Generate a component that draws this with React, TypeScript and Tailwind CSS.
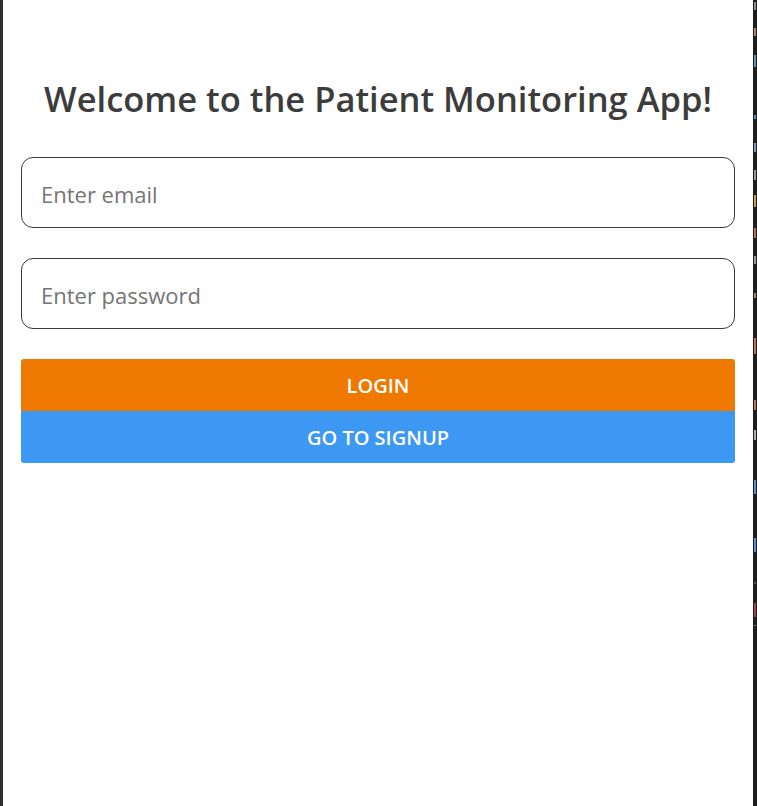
import React from "react";

const codeMarks: { top: number; h: number; c: string }[] = [
  { top: 2, h: 8, c: "#8a8a8a" },
  { top: 28, h: 8, c: "#b08a6a" },
  { top: 55, h: 12, c: "#5a8fc0" },
  { top: 115, h: 4, c: "#4a90d8" },
  { top: 143, h: 9, c: "#7a9ac8" },
  { top: 170, h: 10, c: "#9a9a9a" },
  { top: 195, h: 12, c: "#c8a040" },
  { top: 228, h: 10, c: "#c07050" },
  { top: 256, h: 8, c: "#9a9a9a" },
  { top: 293, h: 5, c: "#b0805a" },
  { top: 338, h: 16, c: "#c07050" },
  { top: 400, h: 10, c: "#c07050" },
  { top: 430, h: 10, c: "#b0b0b0" },
  { top: 480, h: 14, c: "#5a8fd8" },
  { top: 538, h: 14, c: "#5a8fd8" },
  { top: 582, h: 2, c: "#555555" },
  { top: 603, h: 14, c: "#a04848" },
  { top: 625, h: 1, c: "#777777" },
];

export default function App() {
  return (
    <div className="flex h-[806px] w-[757px] overflow-hidden bg-[#1e1e1e]">
      <div className="w-[3px] shrink-0 bg-[#2d2d2d]" />
      <main
        className="flex w-[750px] shrink-0 flex-col bg-white px-[18px] pt-[77px]"
        style={{ fontFamily: '"Open Sans", "Noto Sans", sans-serif' }}
      >
        <h1 className="text-center text-[34.5px] leading-[44px] font-semibold text-[#3c3c3c]">
          Welcome to the Patient Monitoring App!
        </h1>
        <div className="mt-[36px] flex flex-col gap-[30px]">
          <input
            type="email"
            placeholder="Enter email"
            className="h-[71px] w-full rounded-[12px] border border-[#3a3a3a] px-[19px] pt-[3px] text-[22px] text-[#333] outline-none placeholder:text-[#757575]"
          />
          <input
            type="password"
            placeholder="Enter password"
            className="h-[71px] w-full rounded-[12px] border border-[#3a3a3a] px-[19px] pt-[3px] text-[22px] text-[#333] outline-none placeholder:text-[#757575]"
          />
        </div>
        <div className="mt-[30px] flex flex-col">
          <button className="h-[52px] w-full rounded-t-[3px] bg-[#ee7800] pt-[2px] text-[20px] font-semibold text-white">
            LOGIN
          </button>
          <button className="h-[52px] w-full rounded-b-[3px] bg-[#3d98f4] pt-[2px] text-[20px] font-semibold text-white">
            GO TO SIGNUP
          </button>
        </div>
      </main>
      <div className="relative w-[4px] shrink-0 bg-[#1e1e1e]">
        {codeMarks.map((m, i) => (
          <div
            key={i}
            className="absolute left-[1px] w-[2px]"
            style={{ top: m.top, height: m.h, backgroundColor: m.c }}
          />
        ))}
      </div>
    </div>
  );
}
